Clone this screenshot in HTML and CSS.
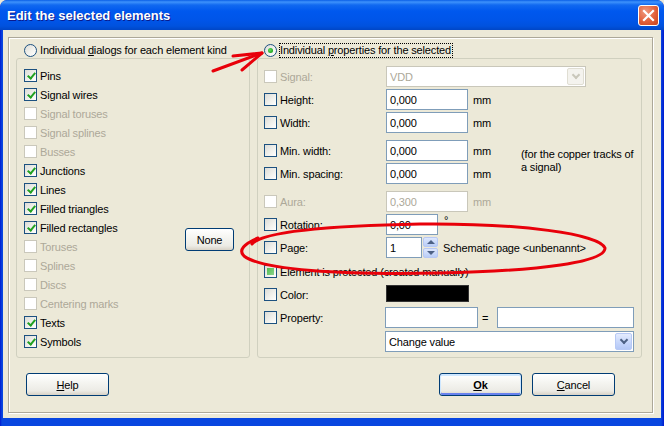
FILE: index.html
```html
<!DOCTYPE html>
<html>
<head>
<meta charset="utf-8">
<title>Edit the selected elements</title>
<link rel="stylesheet" href="styles.css">
</head>
<body>
<div class="window">
  <div class="titlebar">
    <span class="title">Edit the selected elements</span>
    <span class="close"><svg width="13" height="13" viewBox="0 0 13 13"><path d="M2 2 L11 11 M11 2 L2 11" stroke="#fff" stroke-width="2.2" stroke-linecap="square"/></svg></span>
  </div>
  <div class="client">
    <div class="frame">
      <div class="columns">
        <div class="col col-left">
          <div class="radio-row">
            <span class="radio"></span>
            <span class="rlabel">Individual <u>d</u>ialogs for each element kind</span>
          </div>
          <div class="group group-left">
            <ul class="list">
              <li><span class="cb on"></span>Pins</li>
              <li><span class="cb on"></span>Signal wires</li>
              <li class="dis"><span class="cb"></span>Signal toruses</li>
              <li class="dis"><span class="cb"></span>Signal splines</li>
              <li class="dis"><span class="cb"></span>Busses</li>
              <li><span class="cb on"></span>Junctions</li>
              <li><span class="cb on"></span>Lines</li>
              <li><span class="cb on"></span>Filled triangles</li>
              <li><span class="cb on"></span>Filled rectangles</li>
              <li class="dis"><span class="cb"></span>Toruses</li>
              <li class="dis"><span class="cb"></span>Splines</li>
              <li class="dis"><span class="cb"></span>Discs</li>
              <li class="dis"><span class="cb"></span>Centering marks</li>
              <li><span class="cb on"></span>Texts</li>
              <li><span class="cb on"></span>Symbols</li>
            </ul>
            <button class="btn btn-none">None</button>
          </div>
        </div>
        <div class="col col-right">
          <div class="radio-row">
            <span class="radio on"></span>
            <span class="rlabel focus">Individual <u>p</u>roperties for the selected</span>
          </div>
          <div class="group group-right">
            <div class="row dis">
              <span class="lbl"><span class="cb"></span>Signal:</span>
              <span class="combo combo-signal disabled"><span class="ctext">VDD</span><span class="dd"></span></span>
            </div>
            <div class="row">
              <span class="lbl"><span class="cb"></span>Height:</span>
              <span class="input w82">0,000</span><span class="unit">mm</span>
            </div>
            <div class="row">
              <span class="lbl"><span class="cb"></span>Width:</span>
              <span class="input w82">0,000</span><span class="unit">mm</span>
            </div>
            <div class="pair">
              <div class="pair-rows">
                <div class="row">
                  <span class="lbl"><span class="cb"></span>Min. width:</span>
                  <span class="input w82">0,000</span><span class="unit">mm</span>
                </div>
                <div class="row">
                  <span class="lbl"><span class="cb"></span>Min. spacing:</span>
                  <span class="input w82">0,000</span><span class="unit">mm</span>
                </div>
              </div>
              <div class="note">(for the copper tracks of<br>a signal)</div>
            </div>
            <div class="row dis gap5">
              <span class="lbl"><span class="cb"></span>Aura:</span>
              <span class="input w82 disabled">0,300</span><span class="unit">mm</span>
            </div>
            <div class="row">
              <span class="lbl"><span class="cb"></span>Rotation:</span>
              <span class="input w52">0,00</span><span class="deg">°</span>
            </div>
            <div class="row">
              <span class="lbl"><span class="cb"></span>Page:</span>
              <span class="input w36">1</span>
              <span class="spin"><span class="sp up"></span><span class="sp down"></span></span>
              <span class="pagetext">Schematic page &lt;unbenannt&gt;</span>
            </div>
            <div class="row gap1">
              <span class="lbl lbl-wide"><span class="cb mixed"></span>Element is protected (created manually)</span>
            </div>
            <div class="row">
              <span class="lbl"><span class="cb"></span>Color:</span>
              <span class="swatch"></span>
            </div>
            <div class="row">
              <span class="lbl lbl121"><span class="cb"></span>Property:</span>
              <span class="input w93"></span>
              <span class="eq">=</span>
              <span class="input w137"></span>
            </div>
            <div class="row gap1">
              <span class="lbl lbl121"></span>
              <span class="combo combo-value"><span class="ctext">Change value</span><span class="dd"></span></span>
            </div>
          </div>
        </div>
      </div>
      <div class="buttons">
        <button class="btn btn-main"><u>H</u>elp</button>
        <span class="spacer"></span>
        <button class="btn btn-main btn-default"><b><u>O</u>k</b></button>
        <button class="btn btn-main"><u>C</u>ancel</button>
      </div>
    </div>
  </div>
  <svg class="annot" width="664" height="426" viewBox="0 0 664 426">
    <g fill="none" stroke="#e8000a" stroke-width="3" stroke-linecap="round" stroke-linejoin="round">
      <path d="M213 71 L262 53"/>
      <path d="M233 56 L262 53 L242 70"/>
      <path d="M252 244 C262 232 320 226 420 224 C520 223 600 234 605 248 C606 262 540 271 440 273 C340 275 262 270 244 256 C238 250 244 244 258 238"/>
    </g>
  </svg>
</div>
</body>
</html>
```
FILE: styles.css
```css
html, body {
  margin: 0;
  padding: 0;
}
body {
  width: 664px;
  height: 426px;
  overflow: hidden;
  background: #ece9d8;
  font-family: "Liberation Sans", Arial, sans-serif;
  font-size: 11px;
  letter-spacing: -0.15px;
  color: #000;
}
.window {
  position: relative;
  width: 664px;
  height: 426px;
  background: linear-gradient(90deg, #0019cf 0, #0846e0 2px, #0846e0 661px, #0019cf 664px);
  border-radius: 7px 7px 0 0;
  display: flex;
  flex-direction: column;
  overflow: hidden;
}
.titlebar {
  height: 30px;
  flex: none;
  display: flex;
  align-items: center;
  padding: 0 5px 0 7px;
  background: linear-gradient(180deg, #0a5fe6 0, #3e92fb 2px, #1169f0 5px, #0058ee 11px, #0055e9 20px, #0052de 26px, #0046c6 30px);
  border-radius: 7px 7px 0 0;
}
.title {
  color: #fff;
  font-weight: bold;
  font-size: 13px;
  letter-spacing: 0;
  text-shadow: 1px 1px 0 #0a1a8c;
  margin-top: 1px;
}
.close {
  margin-left: auto;
  width: 19px;
  height: 19px;
  border: 1px solid #fff;
  border-radius: 3px;
  background: radial-gradient(circle at 35% 30%, #f09a7e 0, #e2603a 55%, #c7421c 100%);
  display: flex;
  align-items: center;
  justify-content: center;
  margin-top: 1px;
}
.client {
  flex: 1;
  margin: 0 3px 8px 3px;
  background: #ece9d8;
  padding: 7px 8px 5px 5px;
  display: flex;
}
.frame {
  flex: 1;
  border: 1px solid #aca899;
  box-shadow: inset 1px 1px 0 #fff, 1px 1px 0 #fff;
  padding: 4px 0 0 7px;
  display: flex;
  flex-direction: column;
}
.columns {
  display: grid;
  grid-template-columns: 234px 385px;
  column-gap: 7px;
}
.radio-row {
  height: 16px;
  display: flex;
  align-items: center;
}
.col-left .radio-row { padding-left: 8px; }
.col-right .radio-row { padding-left: 7px; }
.radio {
  width: 13px;
  height: 13px;
  box-sizing: border-box;
  border: 1px solid #1c5180;
  border-radius: 50%;
  background: linear-gradient(135deg, #dcdcd7 0, #f4f4f0 60%, #fff 100%);
  position: relative;
  flex: none;
}
.radio.on::after {
  content: "";
  position: absolute;
  left: 3px;
  top: 3px;
  width: 5px;
  height: 5px;
  border-radius: 50%;
  background: radial-gradient(circle at 40% 40%, #5ee35e 0, #21a121 70%);
}
.rlabel {
  margin-left: 2px;
  border: 1px dotted transparent;
  padding: 0 1px 0 0;
  line-height: 13px;
}
.rlabel.focus {
  border-color: #000;
}
.group {
  box-sizing: border-box;
  height: 300px;
  border: 1px solid #d0d0bf;
  border-radius: 3px;
}
.group-left {
  display: flex;
  align-items: flex-start;
  padding: 7px 0 0 7px;
}
.list {
  list-style: none;
  margin: 0;
  padding: 0;
  width: 161px;
}
.list li {
  height: 19px;
  display: flex;
  align-items: center;
  white-space: nowrap;
}
.dis, .dis .lbl {
  color: #aca899;
}
.cb {
  width: 13px;
  height: 13px;
  box-sizing: border-box;
  border: 1px solid #1c5180;
  background: linear-gradient(135deg, #dcdcd7 0, #f2f2ee 60%, #fff 100%);
  margin-right: 3px;
  flex: none;
  position: relative;
}
.dis .cb {
  border-color: #cac8bb;
  background: #fff;
}
.cb.on::after {
  content: "";
  position: absolute;
  top: 1px;
  left: 3.5px;
  width: 3px;
  height: 6px;
  border: solid #21a121;
  border-width: 0 2px 2px 0;
  transform: rotate(40deg);
  transform-origin: 50% 50%;
}
.cb.mixed::after {
  content: "";
  position: absolute;
  left: 2px;
  top: 2px;
  width: 7px;
  height: 7px;
  background: linear-gradient(135deg, #4fbc4f, #8dd48d);
}
.btn {
  font-family: "Liberation Sans", Arial, sans-serif;
  font-size: 11px;
  letter-spacing: -0.15px;
  color: #000;
  box-sizing: border-box;
  border: 1px solid #003c74;
  border-radius: 3px;
  background: linear-gradient(180deg, #fff 0, #f5f5f1 40%, #ecebe5 80%, #d8d2c6 100%);
  padding: 0;
  height: 23px;
}
.btn-none {
  width: 49px;
  margin-top: 162px;
  margin-left: 0;
}
.group-right {
  padding: 6px 0 0 6px;
}
.row {
  height: 23px;
  display: flex;
  align-items: center;
  white-space: nowrap;
}
.gap5 { margin-top: 5px; }
.gap1 { margin-top: 1px; }
.pair {
  display: flex;
  margin-top: 5px;
}
.pair-rows {
  width: 250px;
}
.note {
  margin-left: 7px;
  padding-top: 9px;
  line-height: 13px;
}
.lbl {
  width: 122px;
  display: flex;
  align-items: center;
  flex: none;
}
.lbl121 { width: 121px; }
.lbl-wide { width: auto; }
.input {
  box-sizing: border-box;
  height: 21px;
  border: 1px solid #7f9db9;
  background: #fff;
  padding-left: 3px;
  display: flex;
  align-items: center;
  flex: none;
}
.input.disabled {
  border-color: #c9c7ba;
  background: #fff;
  color: #aca899;
}
.w82 { width: 82px; }
.w52 { width: 52px; }
.w36 { width: 36px; }
.w93 { width: 93px; }
.w137 { width: 137px; }
.unit { margin-left: 5px; }
.dis .unit { color: #aca899; }
.deg {
  margin-left: 6px;
  align-self: flex-start;
  margin-top: 1px;
}
.spin {
  display: flex;
  flex-direction: column;
  margin-left: 1px;
  height: 21px;
  justify-content: space-between;
}
.sp {
  width: 15px;
  height: 10px;
  box-sizing: border-box;
  border: 1px solid #b7c8f4;
  border-radius: 2px;
  background: linear-gradient(180deg, #dde7fd, #b9cdf7);
  position: relative;
}
.sp::after {
  content: "";
  position: absolute;
  left: 3px;
  width: 0;
  height: 0;
  border-left: 4px solid transparent;
  border-right: 4px solid transparent;
}
.sp.up::after {
  top: 2px;
  border-bottom: 4px solid #4d6185;
}
.sp.down::after {
  top: 2px;
  border-top: 4px solid #4d6185;
}
.pagetext { margin-left: 5px; }
.swatch {
  width: 83px;
  height: 17px;
  box-sizing: border-box;
  background: #000;
  border: 1px solid #333;
  margin-top: -2px;
}
.eq {
  margin-left: 4px;
  width: 15px;
}
.combo {
  box-sizing: border-box;
  height: 21px;
  border: 1px solid #7f9db9;
  background: #fff;
  display: flex;
  align-items: center;
  padding: 1px;
  flex: none;
}
.combo.disabled {
  border-color: #c9c7ba;
  color: #aca899;
}
.combo-signal { width: 200px; }
.combo-value { width: 249px; }
.ctext {
  flex: 1;
  padding-left: 2px;
}
.dd {
  width: 17px;
  height: 17px;
  box-sizing: border-box;
  border: 1px solid #b7c9f5;
  border-radius: 2px;
  background: linear-gradient(180deg, #e4ecfe 0, #c5d5fb 60%, #b4c8f6 100%);
  position: relative;
}
.dd::after {
  content: "";
  position: absolute;
  left: 5px;
  top: 3px;
  width: 4px;
  height: 4px;
  border: solid #4d6185;
  border-width: 0 2px 2px 0;
  transform: rotate(45deg);
}
.combo.disabled .dd {
  border-color: #e0ded3;
  background: #f4f3ee;
}
.combo.disabled .dd::after {
  border-color: #c9c7ba;
}
.buttons {
  display: flex;
  margin-top: 15px;
  padding-left: 10px;
  padding-right: 37px;
}
.spacer { flex: 1; }
.btn-main {
  width: 83px;
}
.btn-default {
  box-shadow: inset 0 1px 0 1px #cee7ff, inset 0 -1px 0 1px #6982ee;
  margin-right: 10px;
}
.annot {
  position: absolute;
  left: 0;
  top: 0;
  pointer-events: none;
}
```
